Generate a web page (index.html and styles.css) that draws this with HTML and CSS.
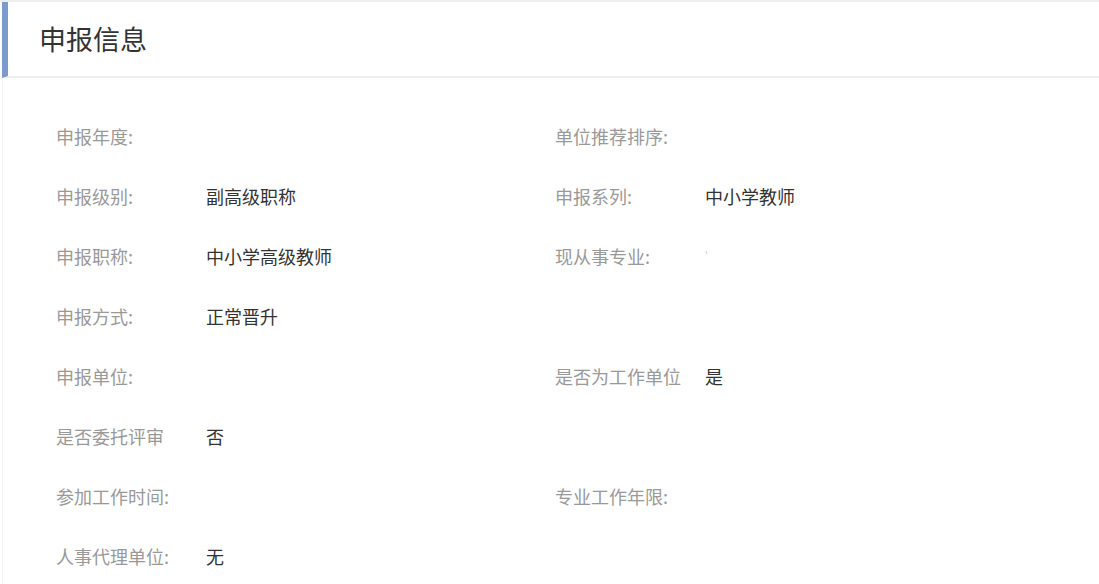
FILE: index.html
```html
<!DOCTYPE html>
<html lang="zh">
<head>
<meta charset="utf-8">
<link rel="stylesheet" href="styles.css">
</head>
<body>
<div class="page">
  <div class="header"><h1 class="title">申报信息</h1></div>
  <div class="body">
    <div class="grid">
      <div class="field"><span class="label">申报年度:</span><span class="value"></span></div>
      <div class="field"><span class="label">单位推荐排序:</span><span class="value"></span></div>
      <div class="field"><span class="label">申报级别:</span><span class="value">副高级职称</span></div>
      <div class="field"><span class="label">申报系列:</span><span class="value">中小学教师</span></div>
      <div class="field"><span class="label">申报职称:</span><span class="value">中小学高级教师</span></div>
      <div class="field"><span class="label">现从事专业:</span><span class="value faint">'</span></div>
      <div class="field"><span class="label">申报方式:</span><span class="value">正常晋升</span></div>
      <div class="field"></div>
      <div class="field"><span class="label">申报单位:</span><span class="value"></span></div>
      <div class="field"><span class="label">是否为工作单位</span><span class="value">是</span></div>
      <div class="field"><span class="label">是否委托评审</span><span class="value">否</span></div>
      <div class="field"></div>
      <div class="field"><span class="label">参加工作时间:</span><span class="value"></span></div>
      <div class="field"><span class="label">专业工作年限:</span><span class="value"></span></div>
      <div class="field"><span class="label">人事代理单位:</span><span class="value">无</span></div>
      <div class="field"></div>
    </div>
  </div>
</div>
</body>
</html>
```
FILE: styles.css
```css
html, body {
  margin: 0;
  padding: 0;
  background: #ffffff;
  font-family: "Noto Sans CJK SC", "Microsoft YaHei", sans-serif;
}
.page {
  border-top: 2px solid #eeeeee;
  min-height: 582px;
}
.header {
  height: 74px;
  border-left: 6px solid #7a9bcc;
  margin-left: 2px;
  border-bottom: 2px solid #eeeeee;
  display: flex;
  align-items: center;
  padding-left: 31px;
}
.title {
  margin: 0;
  font-size: 27px;
  font-weight: 400;
  color: #333333;
  line-height: 1;
  position: relative;
  top: -1px;
}
.body {
  margin-left: 2px;
  border-left: 1px solid #f4f4f4;
  padding: 28px 0 0 53px;
}
.grid {
  display: grid;
  grid-template-columns: 499px 1fr;
  grid-auto-rows: 60px;
}
.field {
  display: flex;
  align-items: center;
  font-size: 18px;
  line-height: 1;
  height: 60px;
}
.label {
  width: 150px;
  color: #999999;
  flex: none;
}
.value {
  color: #333333;
}
.faint {
  color: #cccccc;
  font-size: 10px;
}
```
